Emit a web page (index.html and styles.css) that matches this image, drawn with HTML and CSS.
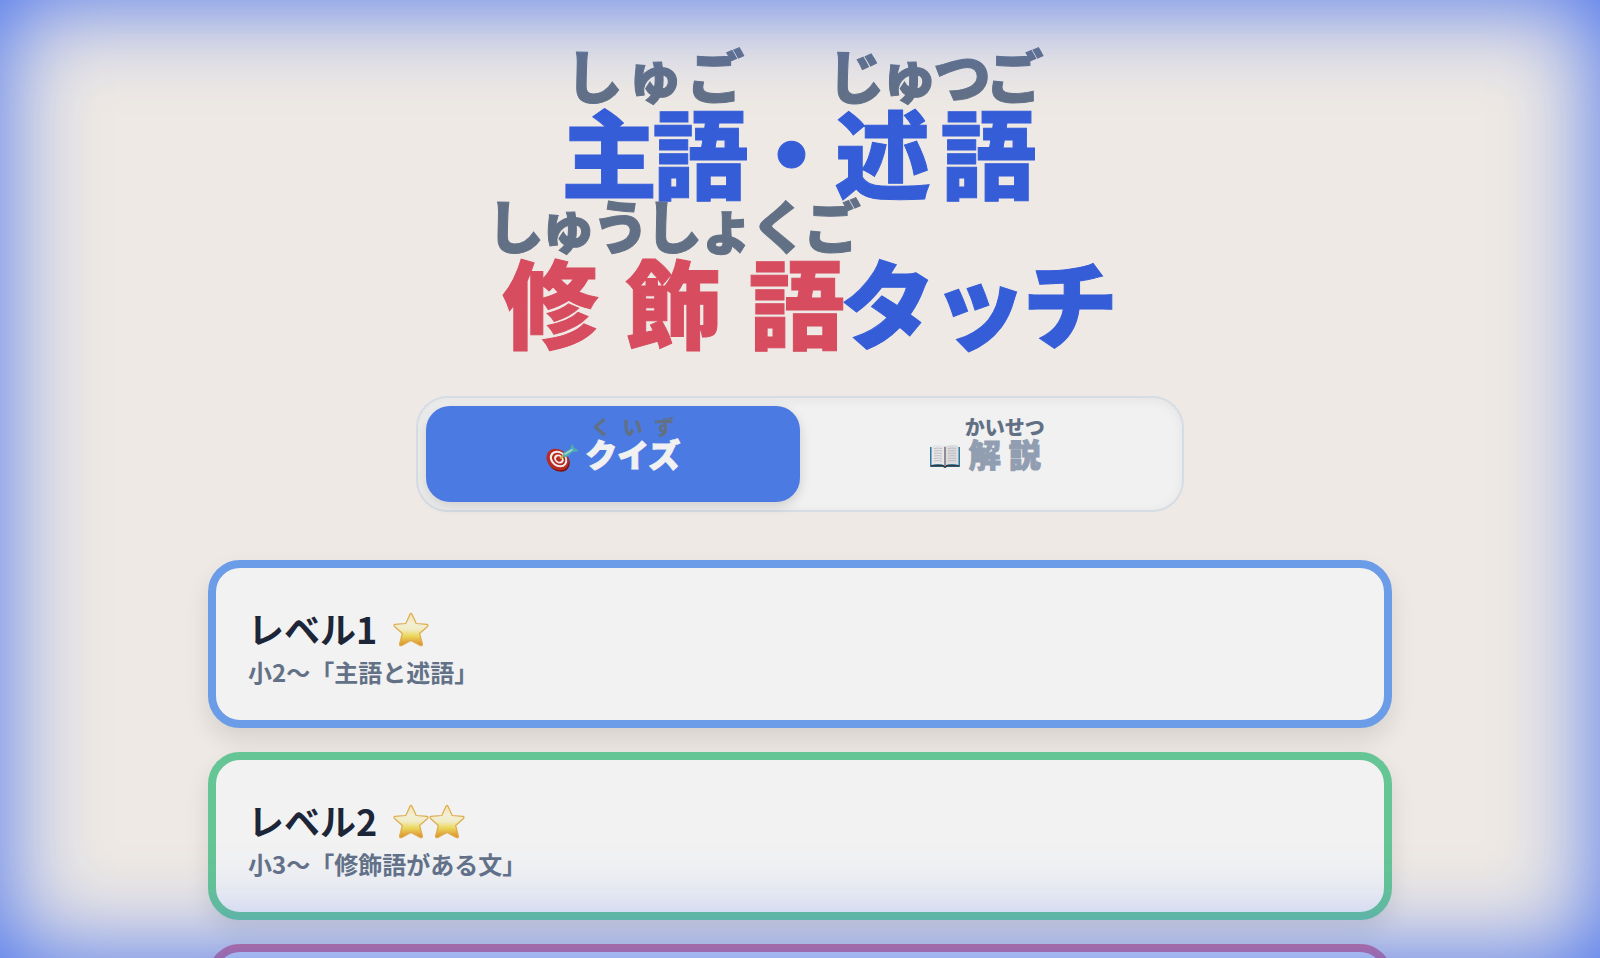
FILE: index.html
```html
<!DOCTYPE html>
<html lang="ja">
<head>
<meta charset="utf-8">
<meta name="viewport" content="width=device-width, initial-scale=1">
<title>主語・述語・修飾語タッチ</title>
<link rel="stylesheet" href="styles.css">
</head>
<body>
<svg class="defs" aria-hidden="true">
  <defs>
    <linearGradient id="gold" x1="0" y1="0" x2="0" y2="1">
      <stop offset="0" stop-color="#f3e2a4"/><stop offset=".3" stop-color="#f2efd8"/><stop offset=".5" stop-color="#f0ecc4"/><stop offset=".7" stop-color="#ecd65c"/><stop offset="1" stop-color="#d98a28"/>
    </linearGradient>
    <symbol id="star" viewBox="0 0 36 36">
      <path d="M17 2.200Q18 .500 19 2.200L23.200 11.500 34 12.400Q35.800 13 34.500 14.500L26.600 21.500 29.400 32Q29.600 34.200 27.600 33.600L18 28.500 8.400 33.600Q6.400 34.200 6.600 32L9.400 21.500 1.500 14.500Q.200 13 2 12.400L12.800 11.500Z" fill="url(#gold)" stroke="#dfac4c" stroke-width="1.200" stroke-linejoin="round"/>
    </symbol>
  </defs>
</svg>
<main class="page">
  <h1 class="title">
    <span class="title-line"><ruby>主語<rt>しゅご</rt></ruby>・<ruby>述語<rt>じゅつご</rt></ruby></span>
    <span class="title-line"><ruby class="accent">修飾語<rt>しゅうしょくご</rt></ruby>タッチ</span>
  </h1>
  <nav class="tabs">
    <button type="button" class="tab tab-active">
      <svg class="tab-icon" viewBox="0 0 32 32" aria-hidden="true">
        <ellipse cx="12.500" cy="18" rx="12" ry="9.800" transform="rotate(38 12.500 18)" fill="#7c1512"/>
        <ellipse cx="11.700" cy="16.500" rx="12" ry="9.800" transform="rotate(38 11.700 16.500)" fill="#bb2a20"/>
        <ellipse cx="12.500" cy="16" rx="9.400" ry="7.600" transform="rotate(38 12.500 16)" fill="#eee"/>
        <ellipse cx="12.700" cy="16" rx="7.200" ry="5.800" transform="rotate(38 12.700 16)" fill="#b9271e"/>
        <ellipse cx="12.900" cy="16" rx="5.200" ry="4.200" transform="rotate(38 12.900 16)" fill="#eee"/>
        <ellipse cx="13" cy="16" rx="3" ry="2.500" transform="rotate(38 13 16)" fill="#b9271e"/>
        <path d="m14 15.500 3.500-3" stroke="#d9a92f" stroke-width="2"/>
        <path d="m17 14 .500-4.500 7-4 1-4.500 2 1.500 .500 2.500 3 1 1 2.500-5.500 .500-5.500 5Z" fill="#4fa9b0"/>
        <path d="m18.500 11.500 8-5" stroke="#9cd8d8" stroke-width="1.500"/>
      </svg>
      <ruby>クイズ<rt>くいず</rt></ruby>
    </button>
    <button type="button" class="tab">
      <svg class="tab-icon" viewBox="0 0 32 32" aria-hidden="true">
        <path d="M1 4h30v20H18l-2 1-2-1H1Z" fill="#2f789b"/>
        <path d="M2 22h28v1.500H18L16 25l-2-1.500H2Z" fill="#34383c"/>
        <path d="M2.500 3q8-2.500 13.500.500v19q-6-2.500-13.500-.500Z" fill="#e7e6e8"/>
        <path d="M29.500 3q-8-2.500-13.500.500v19q6-2.500 13.500-.500Z" fill="#dcdbde"/>
        <path d="M15 3.500 16 4l1-.500v19l-1 1-1-1Z" fill="#8f8e94"/>
        <path d="M5 5.500q5-1 8 .200M5 8q5-1 8 .200M5 10.500q5-1 8 .200M5 13q5-1 8 .200M5 15.500q5-1 8 .200M5 18q5-1 8 .200M19 5.700q4-1.200 8-.200M19 8.200q4-1.200 8-.200M19 10.700q4-1.200 8-.200M19 13.200q4-1.200 8-.200M19 15.700q4-1.200 8-.200M19 18.200q4-1.200 8-.200" fill="none" stroke="#b4b4b8" stroke-width=".8"/>
      </svg>
      <ruby>解説<rt>かいせつ</rt></ruby>
    </button>
  </nav>
  <div class="levels">
    <button type="button" class="card card-blue">
      <span class="card-title">レベル1<span class="stars"><svg class="star"><use href="#star"/></svg></span></span>
      <span class="card-sub">小2〜「主語と述語」</span>
    </button>
    <button type="button" class="card card-green">
      <span class="card-title">レベル2<span class="stars"><svg class="star"><use href="#star"/></svg><svg class="star"><use href="#star"/></svg></span></span>
      <span class="card-sub">小3〜「修飾語がある文」</span>
    </button>
    <button type="button" class="card card-rose" aria-label="レベル3"></button>
  </div>
</main>
<div class="glow"></div>
</body>
</html>
```

FILE: styles.css
```css
* { box-sizing: border-box; }

body {
  margin: 0;
  height: 100vh;
  overflow: hidden;
  background: #eee9e4;
  color: #1c2638;
  font-family: "Noto Sans CJK JP", sans-serif;
}

.defs { position: absolute; width: 0; height: 0; }

.page {
  max-width: 1248px;
  margin: 0 auto;
  padding: 48px 32px;
}

.title {
  margin: 0 0 48px;
  font-size: 96px;
  font-weight: 900;
  line-height: 1;
  letter-spacing: -0.05em;
  text-align: center;
  color: #355dd8;
  -webkit-text-stroke: 1px currentColor;
}

.title-line { display: block; }
.accent { color: #d74c5f; }

rt {
  font-size: 0.6em;
  line-height: 1;
  color: #627086;
}

.tabs {
  display: flex;
  max-width: 768px;
  margin: 0 auto 48px;
  padding: 8px;
  border: 2px solid #d5dce4;
  border-radius: 32px;
  background: #f1f1f1;
  box-shadow: inset 0 2px 12px rgba(0, 0, 0, 0.06);
}

.tab {
  flex: 1;
  height: 96px;
  padding: 0 0 16px;
  border: 0;
  border-radius: 24px;
  background: transparent;
  color: #919db0;
  font: 900 32px/40px "Noto Sans CJK JP", sans-serif;
  -webkit-text-stroke: 1px currentColor;
}

.tab rt { font-size: 20px; -webkit-text-stroke: 0; }

.tab-active {
  background: #4b7ae2;
  color: #f1f1f1;
  box-shadow: 0 4px 12px rgba(0, 0, 0, 0.15);
}

.tab-icon { width: 32px; height: 32px; vertical-align: -8px; }

.levels { display: flex; flex-direction: column; gap: 24px; }

.card {
  display: flex;
  flex-direction: column;
  justify-content: center;
  gap: 8px;
  min-height: 168px;
  padding: 40px 32px 32px;
  border: 8px solid;
  border-radius: 32px;
  background: #f2f2f2;
  box-shadow: 0 12px 24px rgba(0, 0, 0, 0.1);
  font-family: "Noto Sans CJK JP", sans-serif;
  font-weight: 700;
  text-align: left;
}

.card-blue { border-color: #6a9ce8; }
.card-green { border-color: #65c595; }
.card-rose { border-color: #e0687d; }

.card-title {
  display: flex;
  align-items: center;
  gap: 16px;
  color: #1c2638;
  font-size: 36px;
  line-height: 40px;
}

.stars { display: flex; padding-top: 4px; }
.star { width: 36px; height: 36px; }

.card-sub { color: #637187; font-size: 24px; line-height: 32px; }

.glow {
  position: fixed;
  inset: 0;
  pointer-events: none;
  box-shadow: inset 0 0 96px #446fee;
}
```
